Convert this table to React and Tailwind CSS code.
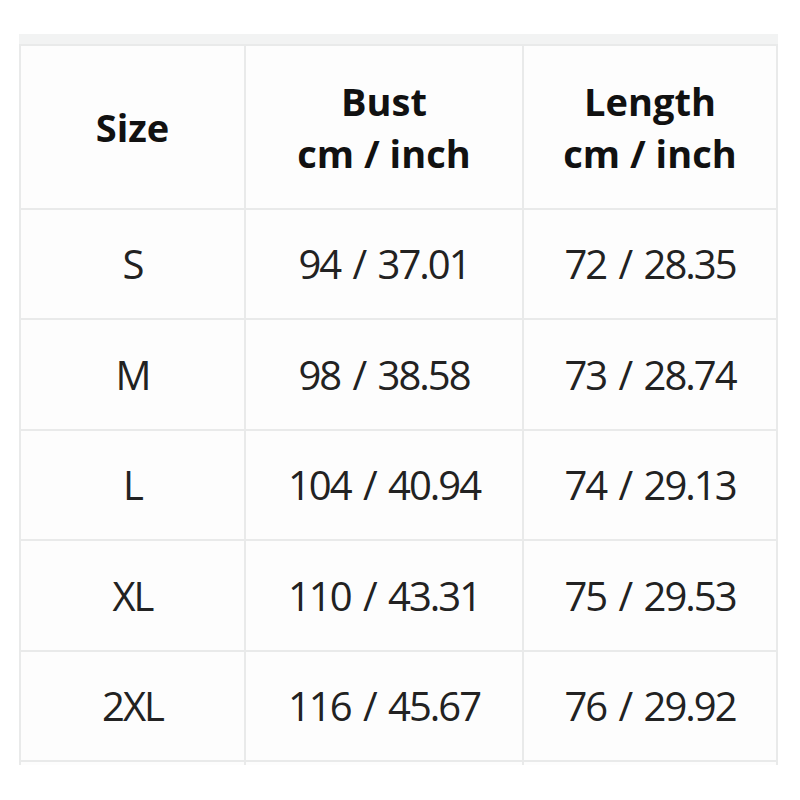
const rows = [
  { size: "S", bust: "94 / 37.01", length: "72 / 28.35", h: "h-[108px]" },
  { size: "M", bust: "98 / 38.58", length: "73 / 28.74", h: "h-[109px]" },
  { size: "L", bust: "104 / 40.94", length: "74 / 29.13", h: "h-[108px]" },
  { size: "XL", bust: "110 / 43.31", length: "75 / 29.53", h: "h-[109px]" },
  { size: "2XL", bust: "116 / 45.67", length: "76 / 29.92", h: "h-[108px]" },
];

function Cell({ children, className = "" }) {
  return (
    <div className={"flex items-center justify-center bg-[#fdfdfd] text-center " + className}>
      {children}
    </div>
  );
}

export default function App() {
  return (
    <div
      className="h-[800px] w-[800px] bg-white pl-[19px] pt-[34px]"
      style={{ fontFamily: "'Open Sans', 'Noto Sans', sans-serif" }}
    >
      <div className="h-[731px] w-[759px] overflow-hidden">
        <div className="h-[10px] bg-[#f2f3f3]" />
        <div className="grid grid-cols-[223px_276px_252px] gap-[2px] bg-[#e9eaea] px-[2px] pt-[2px]">
          <Cell className="h-[162px] text-[38px] font-bold leading-[52px] text-[#111]">Size</Cell>
          <Cell className="h-[162px] text-[38px] font-bold leading-[52px] text-[#111]">
            <div>
              Bust
              <br />
              cm / inch
            </div>
          </Cell>
          <Cell className="h-[162px] text-[38px] font-bold leading-[52px] text-[#111]">
            <div>
              Length
              <br />
              cm / inch
            </div>
          </Cell>
          {rows.map((r) => (
            <div key={r.size} className="contents">
              <Cell className={r.h + " text-[40px] tracking-[-2px] [word-spacing:4px] text-[#222]"}>{r.size}</Cell>
              <Cell className={r.h + " text-[40px] tracking-[-2px] [word-spacing:4px] text-[#222]"}>{r.bust}</Cell>
              <Cell className={r.h + " text-[40px] tracking-[-2px] [word-spacing:4px] text-[#222]"}>{r.length}</Cell>
            </div>
          ))}
          <Cell className="h-[108px]" />
          <Cell className="h-[108px]" />
          <Cell className="h-[108px]" />
        </div>
      </div>
    </div>
  );
}
